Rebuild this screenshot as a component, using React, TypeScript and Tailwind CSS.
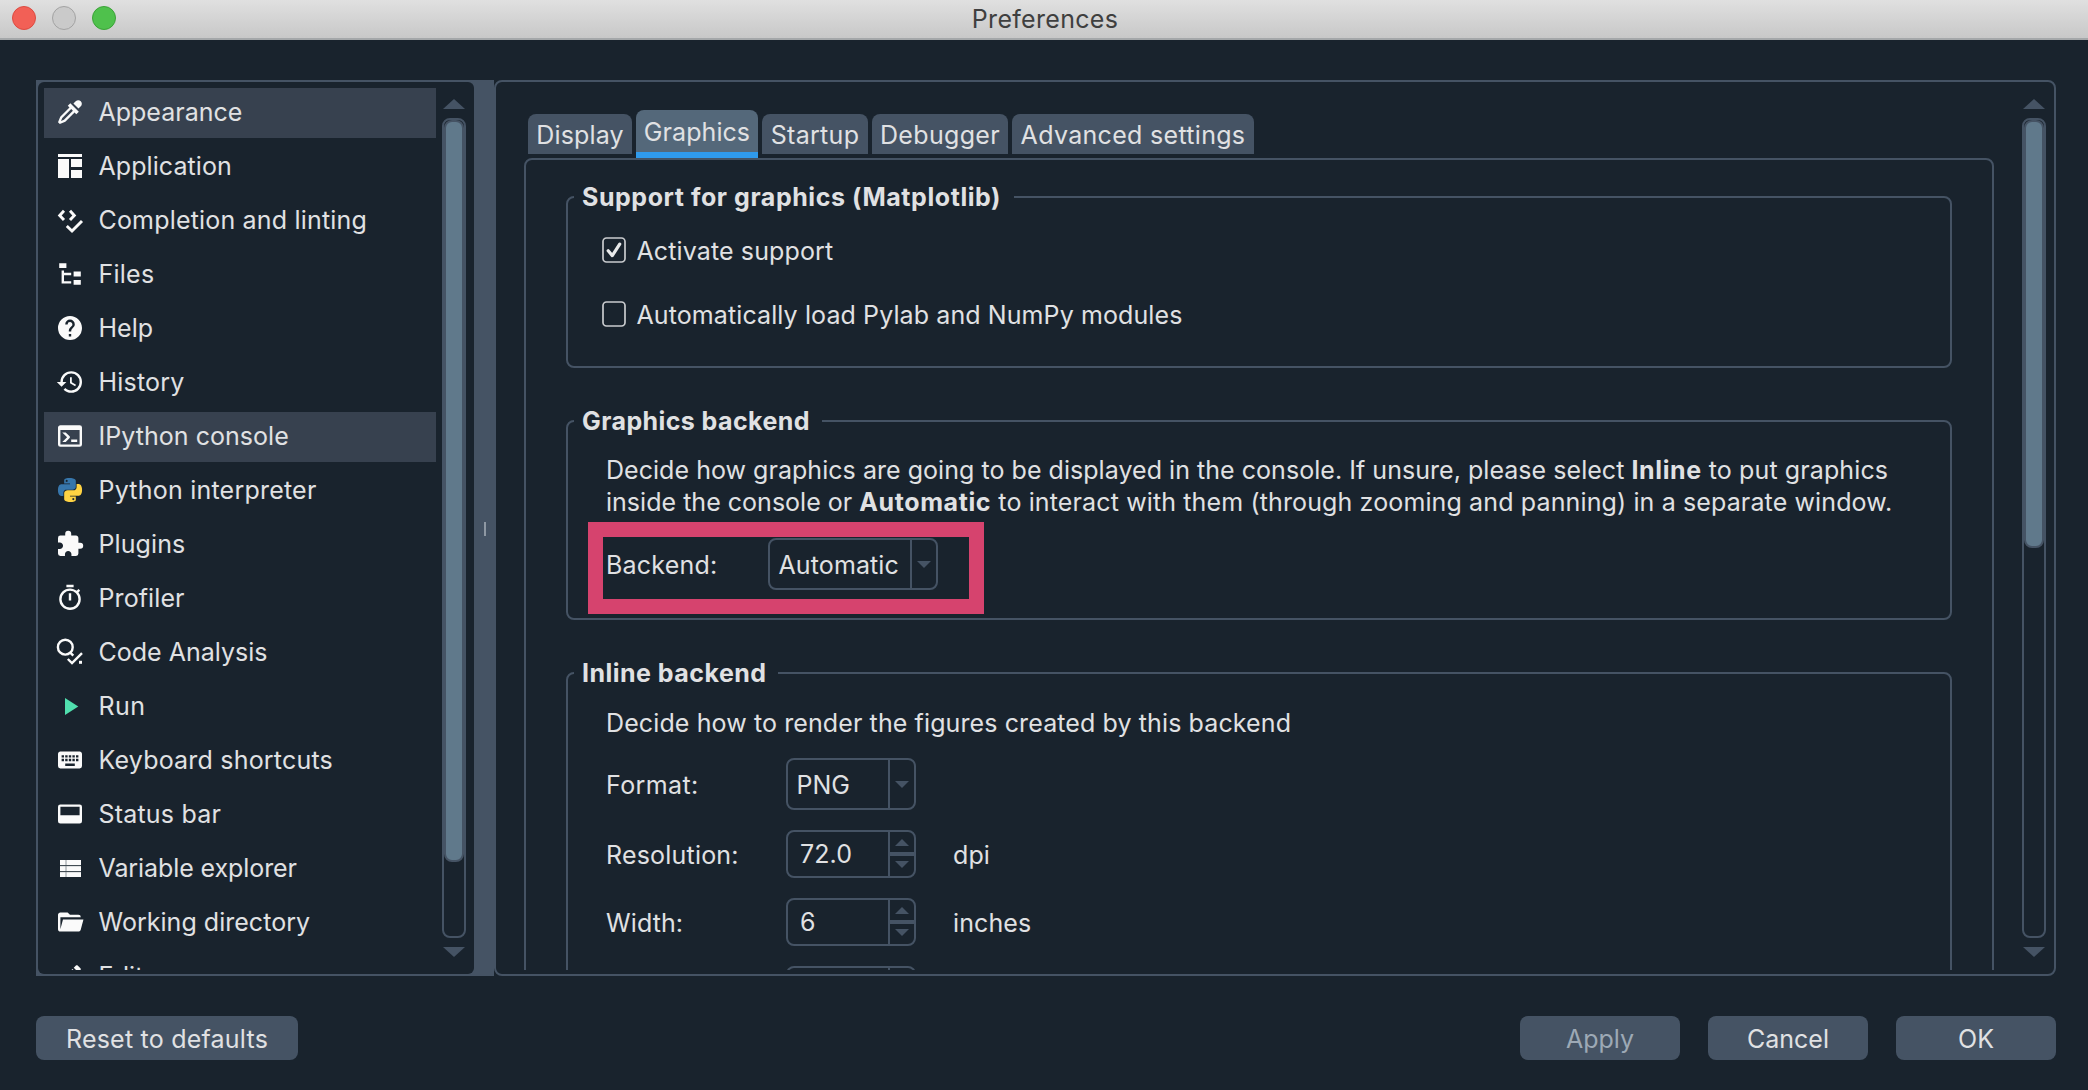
import type { ReactNode } from "react";

/* ---------- icons (28px slot, 24-unit glyphs drawn at 1.2x) ---------- */

function Glyph({ d }: { d: string }) {
  return (
    <svg className="block h-7 w-7 shrink-0 overflow-visible" viewBox="0.333 0.333 23.333 23.333">
      <path d={d} fill="#fafafa" />
    </svg>
  );
}

function Canvas({ children }: { children: ReactNode }) {
  return (
    <svg className="block h-7 w-7 shrink-0 overflow-visible" viewBox="0 0 28 28" fill="#fafafa">
      {children}
    </svg>
  );
}

const eyedropper =
  "M19.35,11.72L17.22,13.85L15.81,12.43L8.1,20.14L3.5,22L2,20.5L3.86,15.9L11.57,8.19L10.15,6.78L12.28,4.65L19.35,11.72M16.76,3C17.93,1.83 19.83,1.83 21,3C22.17,4.17 22.17,6.07 21,7.24L19.08,9.16L14.84,4.92L16.76,3M5.56,17.03L4.5,19.5L6.97,18.44L14.4,11L13,9.6L5.56,17.03Z";
const fileTree = "M3,3H9V7H3V3M15,10H21V14H15V10M15,17H21V21H15V17M13,13H7V18H13V20H7L5,20V9H7V11H13V13Z";
const help =
  "M15.07,11.25L14.17,12.17C13.45,12.89 13,13.5 13,15H11V14.5C11,13.39 11.45,12.39 12.17,11.67L13.41,10.41C13.78,10.05 14,9.55 14,9C14,7.89 13.1,7 12,7A2,2 0 0,0 10,9H8A4,4 0 0,1 12,5A4,4 0 0,1 16,9C16,9.88 15.64,10.67 15.07,11.25M13,19H11V17H13M12,2A10,10 0 0,0 2,12A10,10 0 0,0 12,22A10,10 0 0,0 22,12C22,6.47 17.5,2 12,2Z";
const history =
  "M13.5,8H12V13L16.28,15.54L17,14.33L13.5,12.25V8M13,3A9,9 0 0,0 4,12H1L4.96,16.03L9,12H6A7,7 0 0,1 13,5A7,7 0 0,1 20,12A7,7 0 0,1 13,19C11.07,19 9.32,18.21 8.06,16.94L6.64,18.36C8.27,20 10.5,21 13,21A9,9 0 0,0 22,12A9,9 0 0,0 13,3";
const consoleIcon =
  "M20,19V7H4V19H20M20,3A2,2 0 0,1 22,5V19A2,2 0 0,1 20,21H4A2,2 0 0,1 2,19V5C2,3.89 2.9,3 4,3H20M13,17V15H18V17H13M9.58,13L5.57,9H8.4L11.7,12.3C12.09,12.69 12.09,13.33 11.7,13.72L8.42,17H5.59L9.58,13Z";
const puzzle =
  "M20.5,11H19V7C19,5.89 18.1,5 17,5H13V3.5A2.5,2.5 0 0,0 10.5,1A2.5,2.5 0 0,0 8,3.5V5H4A2,2 0 0,0 2,7V10.8H3.5C5,10.8 6.2,12 6.2,13.5C6.2,15 5,16.2 3.5,16.2H2V20A2,2 0 0,0 4,22H7.8V20.5C7.8,19 9,17.8 10.5,17.8C12,17.8 13.2,19 13.2,20.5V22H17A2,2 0 0,0 19,20V16H20.5A2.5,2.5 0 0,0 23,13.5A2.5,2.5 0 0,0 20.5,11Z";
const timer =
  "M12,20A7,7 0 0,1 5,13A7,7 0 0,1 12,6A7,7 0 0,1 19,13A7,7 0 0,1 12,20M19.03,7.39L20.45,5.97C20,5.46 19.55,5 19.04,4.56L17.62,6C16.07,4.74 14.12,4 12,4A9,9 0 0,0 3,13A9,9 0 0,0 12,22C17,22 21,17.97 21,13C21,10.88 20.26,8.93 19.03,7.39M11,14H13V8H11M15,1H9V3H15V1Z";
const keyboard =
  "M19,10H17V8H19M19,13H17V11H19M16,10H14V8H16M16,13H14V11H16M16,17H8V15H16M7,10H5V8H7M7,13H5V11H7M8,11H10V13H8M8,8H10V10H8M11,11H13V13H11M11,8H13V10H11M20,5H4C2.89,5 2,5.89 2,7V17A2,2 0 0,0 4,19H20A2,2 0 0,0 22,17V7C22,5.89 21.1,5 20,5Z";
const dockBottom =
  "M20,4H4A2,2 0 0,0 2,6V18A2,2 0 0,0 4,20H20A2,2 0 0,0 22,18V6A2,2 0 0,0 20,4M20,13H4V6H20V13Z";
const folderOpen =
  "M19,20H4C2.89,20 2,19.1 2,18V6C2,4.89 2.89,4 4,4H10L12,6H19A2,2 0 0,1 21,8H21L4,8V18L6.14,10H23.21L20.93,18.5C20.7,19.37 19.92,20 19,20Z";
const pencil =
  "M20.71,7.04C21.1,6.65 21.1,6 20.71,5.63L18.37,3.29C18,2.9 17.35,2.9 16.96,3.29L15.12,5.12L18.87,8.87M3,17.25V21H6.75L17.81,9.93L14.06,6.18L3,17.25Z";

const LayoutIcon = () => (
  <Canvas>
    <path d="M2 2h24v3H2zM2 7h11v19H2zM15 7h11v8H15zM15 18h11v8H15z" />
  </Canvas>
);

const CodeCheckIcon = () => (
  <Canvas>
    <path
      d="M8 4.8L3.7 9.4L8 14M14 4.8L18.3 9.4L14 14M10.8 20L16 25L26 15"
      fill="none"
      stroke="#fafafa"
      strokeWidth="2.9"
    />
  </Canvas>
);

const AnalysisIcon = () => (
  <Canvas>
    <circle cx="9.3" cy="9.2" r="7.4" fill="none" stroke="#fafafa" strokeWidth="2.4" />
    <path d="M14 14.3L17.3 17.6M11.8 21L16 25L26 15.2" fill="none" stroke="#fafafa" strokeWidth="2.4" />
    <rect x="23" y="22.8" width="3" height="3" />
  </Canvas>
);

const PythonIcon = () => (
  <svg className="block h-7 w-7 shrink-0 overflow-visible" viewBox="-2 -2 28 28">
    <path
      fill="#3776ab"
      d="M14.25.18l.9.2.73.26.59.3.45.32.34.34.25.34.16.33.1.3.04.26.02.2-.01.13V8.5l-.05.63-.13.55-.21.46-.26.38-.3.31-.33.25-.35.19-.35.14-.33.1-.3.07-.26.04-.21.02H8.77l-.69.05-.59.14-.5.22-.41.27-.33.32-.27.35-.2.36-.15.37-.1.35-.07.32-.04.27-.02.21v3.06H3.17l-.21-.03-.28-.07-.32-.12-.35-.18-.36-.26-.36-.36-.35-.46-.32-.59-.28-.73-.21-.88-.14-1.05-.05-1.23.06-1.22.16-1.04.24-.87.32-.71.36-.57.4-.44.42-.33.42-.24.4-.16.36-.1.32-.05.24-.01h.16l.06.01h8.16v-.83H6.18l-.01-2.75-.02-.37.05-.34.11-.31.17-.28.25-.26.31-.23.38-.2.44-.18.51-.15.58-.12.64-.1.71-.06.77-.04.84-.02 1.27.05zm-6.3 1.98l-.23.33-.08.41.08.41.23.34.33.22.41.09.41-.09.33-.22.23-.34.08-.41-.08-.41-.23-.33-.33-.22-.41-.09-.41.09z"
    />
    <path
      fill="#ffd343"
      d="M21.04 6.11l.28.06.32.12.35.18.36.27.36.35.35.47.32.59.28.73.21.88.14 1.04.05 1.23-.06 1.23-.16 1.04-.24.86-.32.71-.36.57-.4.45-.42.33-.42.24-.4.16-.36.09-.32.05-.24.02-.16-.01h-8.22v.82h5.84l.01 2.76.02.36-.05.34-.11.31-.17.29-.25.25-.31.24-.38.2-.44.17-.51.15-.58.13-.64.09-.71.07-.77.04-.84.01-1.27-.04-1.07-.14-.9-.2-.73-.25-.59-.3-.45-.33-.34-.34-.25-.34-.16-.33-.1-.3-.04-.25-.02-.2.01-.13v-5.34l.05-.64.13-.54.21-.46.26-.38.3-.32.33-.24.35-.2.35-.14.33-.1.3-.06.26-.04.21-.02.13-.01h5.84l.69-.05.59-.14.5-.21.41-.28.33-.32.27-.35.2-.36.15-.36.1-.35.07-.32.04-.28.02-.21V6.07h2.09l.14.01zm-6.47 14.25l-.23.33-.08.41.08.41.23.33.33.23.41.08.41-.08.33-.23.23-.33.08-.41-.08-.41-.23-.33-.33-.23-.41-.08-.41.08z"
    />
  </svg>
);

const RunIcon = () => (
  <Canvas>
    <path d="M9 6L22.3 14.4L9 23z" fill="#50dfae" />
  </Canvas>
);

const TableIcon = () => (
  <Canvas>
    <path d="M4 6h21v17H4z" fill="#8f969b" />
    <path d="M4 6h5.5v5H4zM10.5 6H25v5H10.5zM4 12.3h5.5v4.7H4zM10.5 12.3H25v4.7H10.5zM4 18.3h5.5V23H4zM10.5 18.3H25V23H10.5z" />
    <path d="M4 11.2h21v.8H4zM4 17.2h21v.8H4z" fill="#2a343d" />
  </Canvas>
);

function Triangle({ up = false, small = false }: { up?: boolean; small?: boolean }) {
  return (
    <svg
      className={small ? "block h-[7px] w-[14px] shrink-0" : "block h-[10px] w-[22px] shrink-0"}
      viewBox="0 0 22 10"
      preserveAspectRatio="none"
    >
      <path d={up ? "M0 10L11 0L22 10z" : "M0 0L11 10L22 0z"} fill="#455364" />
    </svg>
  );
}

/* ---------- sidebar ---------- */

type Item = { label: string; icon: ReactNode; tracking: string; selected?: boolean };

const items: Item[] = [
  { label: "Appearance", icon: <Glyph d={eyedropper} />, tracking: "tracking-normal", selected: true },
  { label: "Application", icon: <LayoutIcon />, tracking: "tracking-[0.08px]" },
  { label: "Completion and linting", icon: <CodeCheckIcon />, tracking: "tracking-[0.18px]" },
  { label: "Files", icon: <Glyph d={fileTree} />, tracking: "tracking-[0.25px]" },
  { label: "Help", icon: <Glyph d={help} />, tracking: "tracking-normal" },
  { label: "History", icon: <Glyph d={history} />, tracking: "tracking-[0.2px]" },
  { label: "IPython console", icon: <Glyph d={consoleIcon} />, tracking: "tracking-[0.04px]", selected: true },
  { label: "Python interpreter", icon: <PythonIcon />, tracking: "tracking-[0.22px]" },
  { label: "Plugins", icon: <Glyph d={puzzle} />, tracking: "tracking-[0.1px]" },
  { label: "Profiler", icon: <Glyph d={timer} />, tracking: "tracking-[0.1px]" },
  { label: "Code Analysis", icon: <AnalysisIcon />, tracking: "tracking-normal" },
  { label: "Run", icon: <RunIcon />, tracking: "tracking-[0.4px]" },
  { label: "Keyboard shortcuts", icon: <Glyph d={keyboard} />, tracking: "tracking-[0.2px]" },
  { label: "Status bar", icon: <Glyph d={dockBottom} />, tracking: "tracking-[0.2px]" },
  { label: "Variable explorer", icon: <TableIcon />, tracking: "tracking-[-0.09px]" },
  { label: "Working directory", icon: <Glyph d={folderOpen} />, tracking: "tracking-[0.03px]" },
  { label: "Editor", icon: <Glyph d={pencil} />, tracking: "tracking-[0.1px]" },
];

function ScrollBar({ thumb }: { thumb: string }) {
  return (
    <div className="flex w-6 shrink-0 flex-col items-center pt-[17px]">
      <Triangle up />
      <div className="mt-[9px] h-[820px] w-6 rounded-lg border-2 border-[#455364]">
        <div className={`${thumb} w-5 rounded-lg border-2 border-[#455364] bg-[#60798b]`} />
      </div>
      <div className="mt-[9px]">
        <Triangle />
      </div>
    </div>
  );
}

function Sidebar() {
  return (
    <div className="flex h-[896px] w-[458px] shrink-0 items-center bg-[#455364] pl-[2px]">
      <div className="flex h-[892px] w-[436px] rounded-md bg-[#19232d] pl-[6px]">
        <ul className="mt-[6px] flex h-[882px] w-[392px] flex-col gap-1 overflow-hidden">
          {items.map((it) => (
            <li
              key={it.label}
              className={`flex h-[50px] shrink-0 items-center gap-[14.5px] pb-[2px] pl-3 ${
                it.selected ? "bg-[#37414f]" : ""
              }`}
            >
              {it.icon}
              <span className={`whitespace-nowrap ${it.tracking}`}>{it.label}</span>
            </li>
          ))}
        </ul>
        <div className="ml-[6px]">
          <ScrollBar thumb="h-[742px]" />
        </div>
      </div>
      <div className="ml-[10px] mt-[2px] h-[14px] w-[2px] bg-[#8e98a3]" />
    </div>
  );
}

/* ---------- form controls ---------- */

function Check({ checked = false, label, tracking }: { checked?: boolean; label: string; tracking: string }) {
  return (
    <div className="flex h-8 items-center gap-[10.5px]">
      <svg className="h-[26px] w-6 shrink-0" viewBox="0 0 24 26">
        <rect x="1" y="1" width="22" height="24" rx="3.5" fill="none" stroke="#c9cbce" strokeWidth="1.7" />
        {checked && (
          <path
            d="M6.2 13.8L10.3 18.6L17.7 7.2"
            fill="none"
            stroke="#e8e9ea"
            strokeWidth="3.2"
            strokeLinecap="round"
            strokeLinejoin="round"
          />
        )}
      </svg>
      <span className={`whitespace-nowrap pt-[2px] ${tracking}`}>{label}</span>
    </div>
  );
}

function Combo({ value, width, tracking }: { value: string; width: string; tracking: string }) {
  return (
    <div className={`flex h-[52px] ${width} rounded-lg border-2 border-[#455364]`}>
      <div className={`flex flex-1 items-center pl-[8.5px] pt-[1px] ${tracking}`}>{value}</div>
      <div className="flex w-[26px] items-center justify-center border-l-2 border-[#455364]">
        <Triangle small />
      </div>
    </div>
  );
}

function Spin({ value }: { value: string }) {
  return (
    <div className="flex h-12 w-[130px] shrink-0 rounded-lg border-2 border-[#455364]">
      <div className="flex flex-1 items-center pb-[1px] pl-[12px] tracking-[0.1px]">{value}</div>
      <div className="flex w-[26px] flex-col border-l-2 border-[#455364]">
        <div className="flex h-5 items-center justify-center">
          <Triangle small up />
        </div>
        <div className="h-1 bg-[#455364]" />
        <div className="flex h-5 items-center justify-center pb-[3px]">
          <Triangle small />
        </div>
      </div>
    </div>
  );
}

function Group({ title, titleClass, className, children }: { title: string; titleClass: string; className: string; children: ReactNode }) {
  return (
    <fieldset className={`relative shrink-0 rounded-lg border-2 border-[#455364] ${className}`}>
      <legend className={`ml-[6px] h-8 whitespace-nowrap pl-2 font-bold ${titleClass}`}>{title}</legend>
      {children}
    </fieldset>
  );
}

const tabs = [
  { label: "Display", cls: "w-[104px] tracking-[0.16px]" },
  { label: "Graphics", cls: "w-[122px] tracking-[0.07px]" },
  { label: "Startup", cls: "w-[106px] tracking-[0.31px]" },
  { label: "Debugger", cls: "w-[136px] tracking-[0.33px]" },
  { label: "Advanced settings", cls: "w-[242px] tracking-[0.31px]" },
];

function Tabs() {
  return (
    <div className="flex h-12 gap-1 pl-1">
      {tabs.map((t) =>
        t.label === "Graphics" ? (
          <div
            key={t.label}
            className={`flex h-12 items-center justify-center rounded-t-lg bg-[#54687a] bg-linear-to-t from-[#2f9aec] from-[6px] to-transparent to-[6px] pb-1 ${t.cls}`}
          >
            {t.label}
          </div>
        ) : (
          <div
            key={t.label}
            className={`mt-1 flex h-10 items-center justify-center whitespace-nowrap rounded-t-lg bg-[#455364] pt-[2px] ${t.cls}`}
          >
            {t.label}
          </div>
        )
      )}
    </div>
  );
}

function Content() {
  return (
    <div className="flex h-[896px] w-[1562px] shrink-0 rounded-lg border-2 border-[#455364] pl-7">
      <div className="flex h-[888px] w-[1470px] shrink-0 flex-col overflow-hidden pt-7">
        <Tabs />
        <div className="flex h-[900px] shrink-0 flex-col gap-[37px] rounded-lg border-2 border-[#455364] px-10 pt-[21px]">
          <Group title="Support for graphics (Matplotlib)" titleClass="w-[440px] tracking-[0.56px]" className="h-[187px]">
            <div className="flex flex-col gap-8 pl-[34px] pt-[21px]">
              <Check checked label="Activate support" tracking="tracking-[0.12px]" />
              <Check label="Automatically load Pylab and NumPy modules" tracking="tracking-[0.1px]" />
            </div>
          </Group>

          <Group title="Graphics backend" titleClass="w-[248px] tracking-[0.42px]" className="h-[215px]">
            <div className="flex flex-col pl-[38px] pt-[17px]">
              <p className="whitespace-nowrap leading-8">
                <span className="tracking-[0.04px]">
                  Decide how graphics are going to be displayed in the console. If unsure, please select{" "}
                </span>
                <b className="tracking-[0.6px]">Inline</b>
                <span className="tracking-[0.11px]"> to put graphics</span>
                <br />
                <span className="tracking-[0.02px]">inside the console or </span>
                <b className="tracking-[0.6px]">Automatic</b>
                <span className="tracking-[0.13px]">
                  {" "}
                  to interact with them (through zooming and panning) in a separate window.
                </span>
              </p>
              <div className="mt-5 flex items-center">
                <span className="w-[162px] pt-[2px] tracking-[0.22px]">Backend:</span>
                <Combo value="Automatic" width="w-[170px]" tracking="tracking-[0.11px]" />
              </div>
            </div>
            {/* highlight frame drawn over the backend row */}
            <div className="absolute left-[20px] top-[85px] h-[92px] w-[396px] border-[15px] border-[#d6436e]" />
          </Group>

          <Group title="Inline backend" titleClass="w-[204px] tracking-[0.48px]" className="h-[500px]">
            <div className="flex flex-col gap-5 pl-[38px] pt-[18px]">
              <p className="-mb-px h-8 leading-8 tracking-[0.11px]">
                Decide how to render the figures created by this backend
              </p>
              <div className="flex items-center">
                <span className="w-[180px] pt-[2px] tracking-[0.4px]">Format:</span>
                <Combo value="PNG" width="w-[130px]" tracking="tracking-normal" />
              </div>
              <div className="flex items-center">
                <span className="w-[180px] pt-[1px] tracking-[0.2px]">Resolution:</span>
                <Spin value="72.0" />
                <span className="ml-[37px] pt-[1px] tracking-[0.1px]">dpi</span>
              </div>
              <div className="flex items-center">
                <span className="w-[180px] pt-[1px] tracking-[0.1px]">Width:</span>
                <Spin value="6" />
                <span className="ml-[37px] pt-[1px] tracking-[0.1px]">inches</span>
              </div>
              <div className="flex items-center pl-[180px]">
                <Spin value="" />
              </div>
            </div>
          </Group>
        </div>
      </div>
      <div className="ml-7">
        <ScrollBar thumb="h-[428px]" />
      </div>
    </div>
  );
}

function Button({ children, className }: { children: ReactNode; className: string }) {
  return (
    <button className={`flex h-11 items-center justify-center rounded-lg bg-[#455364] pt-[2px] ${className}`}>
      {children}
    </button>
  );
}

export default function App() {
  return (
    <div className="flex h-[1090px] w-[2088px] flex-col overflow-hidden bg-[#19232d] font-['Inter',sans-serif] text-[25px] leading-8 text-[#e0e1e3]">
      <header className="grid h-10 shrink-0 grid-cols-3 items-center border-b-2 border-[#a4a7a9] bg-linear-to-b from-[#e0e0e0] to-[#c8c8c8] px-3">
        <div className="flex gap-4 pb-[2px]">
          <span className="h-6 w-6 rounded-full border border-[#dc4b41] bg-[#f26056]" />
          <span className="h-6 w-6 rounded-full border border-[#a3a3a3] bg-[#cacaca]" />
          <span className="h-6 w-6 rounded-full border border-[#3ba338] bg-[#4fc14c]" />
        </div>
        <h1 className="pl-[2px] text-center tracking-[0.3px] text-[#3f3f3f]">Preferences</h1>
      </header>

      <main className="flex pl-9 pr-8 pt-10">
        <Sidebar />
        <Content />
      </main>

      <footer className="mt-10 flex items-center justify-between pl-9 pr-8">
        <Button className="w-[262px] tracking-[0.22px]">Reset to defaults</Button>
        <div className="flex gap-7">
          <Button className="w-40 text-[#9da9b5]">Apply</Button>
          <Button className="w-40">Cancel</Button>
          <Button className="w-40">OK</Button>
        </div>
      </footer>
    </div>
  );
}
